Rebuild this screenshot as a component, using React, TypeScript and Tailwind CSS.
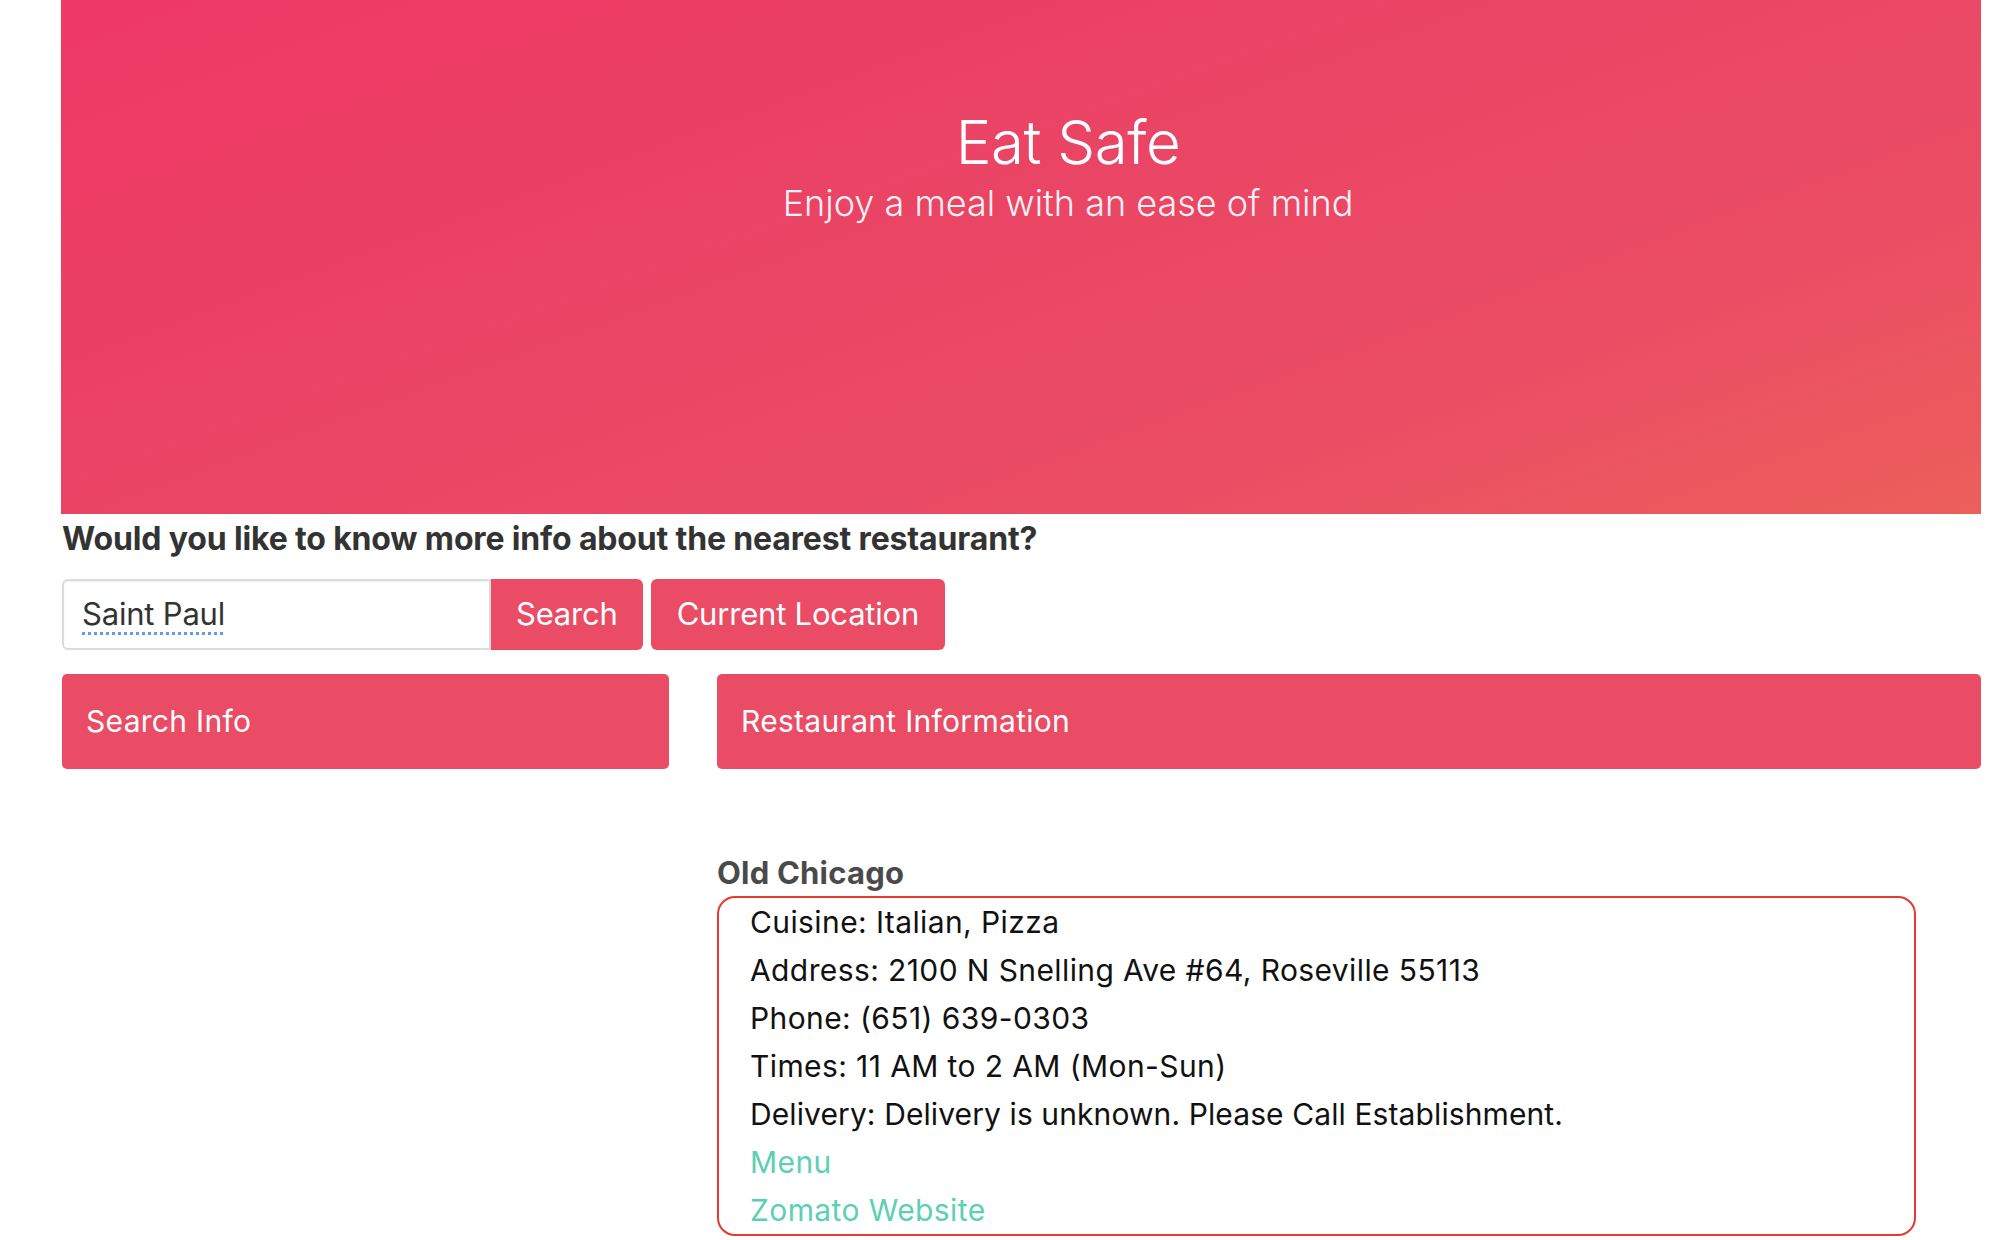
import React from "react";

export default function App() {
  return (
    <div className="min-h-[1240px] bg-white font-['Inter',sans-serif] pl-[61px] pr-[33px]">
      {/* Banner */}
      <div className="h-[514px] w-[1920px] bg-[linear-gradient(160deg,#ee3866_0%,#ea4565_45%,#eb4e64_75%,#ec5f5a_100%)] flex flex-col items-center pl-[94px] pt-[106px] text-white">
        <h1 className="text-[60px] leading-[72px] font-light tracking-[-0.5px]">Eat Safe</h1>
        <p className="text-[36px] leading-[44px] font-light mt-[3px] text-[#fdf1f3]">
          Enjoy a meal with an ease of mind
        </p>
      </div>

      {/* Question */}
      <div className="pl-[1px] mt-[6px] text-[32px] leading-[38px] font-bold text-[#333333] tracking-[-0.15px]">
        Would you like to know more info about the nearest restaurant?
      </div>

      {/* Search row */}
      <div className="mt-[21px] pl-[1px] flex items-stretch h-[71px]">
        <div className="w-[429px] border-2 border-[#dcdcdc] rounded-l-[6px] flex items-center pl-[18px] bg-white shadow-[inset_0_1px_2px_rgba(0,0,0,0.06)]">
          <span className="text-[31px] text-[#333333] underline decoration-dotted decoration-[3px] underline-offset-[7px] decoration-[#5c9cf2] tracking-[-0.2px]">
            Saint Paul
          </span>
        </div>
        <button className="bg-[#e94c64] text-white text-[31px] px-[25px] rounded-r-[6px] tracking-[-0.2px]">
          Search
        </button>
        <button className="ml-[8px] bg-[#e94c64] text-white text-[31px] px-[26px] rounded-[6px] tracking-[-0.2px]">
          Current Location
        </button>
      </div>

      {/* Columns */}
      <div className="mt-[24px] pl-[1px] grid grid-cols-[607px_1fr] gap-x-[48px]">
        <div>
          <div className="h-[95px] bg-[#e94c64] rounded-[5px] flex items-center pl-[24px] text-white text-[30px] tracking-[0.3px]">
            Search Info
          </div>
        </div>
        <div>
          <div className="h-[95px] bg-[#e94c64] rounded-[5px] flex items-center pl-[24px] text-white text-[30px] tracking-[0.3px]">
            Restaurant Information
          </div>

          <div className="mt-[86px] text-[31px] leading-[36px] font-bold text-[#4a4a4a] tracking-[0.2px]">
            Old Chicago
          </div>

          <div className="mt-[5px] w-[1199px] border-2 border-[#e8392e] rounded-[18px] pl-[31px] text-[30px] leading-[48px] text-[#111111] tracking-[0.4px]">
            <div>Cuisine: Italian, Pizza</div>
            <div>Address: 2100 N Snelling Ave #64, Roseville 55113</div>
            <div>Phone: (651) 639-0303</div>
            <div>Times: 11 AM to 2 AM (Mon-Sun)</div>
            <div className="tracking-[0.1px]">Delivery: Delivery is unknown. Please Call Establishment.</div>
            <div>
              <a className="text-[#5dcfb3]" href="#">Menu</a>
            </div>
            <div>
              <a className="text-[#5dcfb3]" href="#">Zomato Website</a>
            </div>
          </div>
        </div>
      </div>
    </div>
  );
}
